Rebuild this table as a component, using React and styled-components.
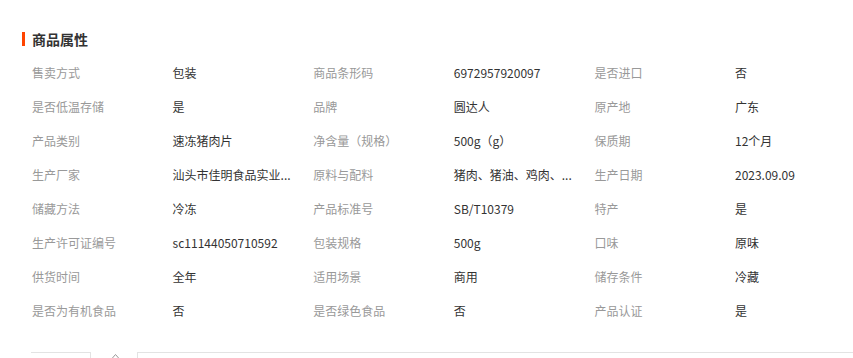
import React from "react";
import styled, { createGlobalStyle } from "styled-components";

const Global = createGlobalStyle`
  body {
    margin: 0;
    background: #fff;
    font-family: "Noto Sans CJK SC", "Liberation Sans", sans-serif;
    overflow: hidden;
  }
`;

const Page = styled.div`
  width: 853px;
  height: 358px;
  overflow: hidden;
  padding-top: 29px;
  box-sizing: border-box;
`;

const Title = styled.h2`
  margin: 0 0 6px 22px;
  display: flex;
  align-items: center;
  height: 20px;
  font-size: 14px;
  font-weight: bold;
  color: #333;
  &::before {
    content: "";
    width: 3px;
    height: 14px;
    background: #ff4400;
    margin-right: 7px;
  }
`;

const Grid = styled.div`
  display: grid;
  grid-template-columns: repeat(6, 140.6px);
  grid-auto-rows: 34px;
  padding-left: 32px;
`;

const Cell = styled.div`
  display: flex;
  align-items: center;
  font-size: 12px;
  color: ${(p) => (p.$label ? "#999" : "#333")};
  white-space: nowrap;
`;

const Bottom = styled.div`
  display: flex;
  align-items: flex-start;
  margin-top: 25px;
  height: 10px;
`;

const Tab = styled.div`
  margin-left: 31px;
  width: 59px;
  height: 10px;
  border-top: 1px solid #e3e3e3;
  border-right: 1px solid #e3e3e3;
`;

const Caret = styled.svg`
  margin: 1px 0 0 20px;
`;

const Panel = styled.div`
  margin-left: 17px;
  flex: 1;
  height: 10px;
  border-top: 1px solid #e3e3e3;
  border-left: 1px solid #e3e3e3;
`;

const rows = [
  ["售卖方式", "包装", "商品条形码", "6972957920097", "是否进口", "否"],
  ["是否低温存储", "是", "品牌", "圆达人", "原产地", "广东"],
  ["产品类别", "速冻猪肉片", "净含量（规格）", "500g（g）", "保质期", "12个月"],
  ["生产厂家", "汕头市佳明食品实业...", "原料与配料", "猪肉、猪油、鸡肉、...", "生产日期", "2023.09.09"],
  ["储藏方法", "冷冻", "产品标准号", "SB/T10379", "特产", "是"],
  ["生产许可证编号", "sc11144050710592", "包装规格", "500g", "口味", "原味"],
  ["供货时间", "全年", "适用场景", "商用", "储存条件", "冷藏"],
  ["是否为有机食品", "否", "是否绿色食品", "否", "产品认证", "是"],
];

export default function App() {
  return (
    <Page>
      <Global />
      <Title>商品属性</Title>
      <Grid>
        {rows.map((r, i) =>
          r.map((t, j) => (
            <Cell key={i + "-" + j} $label={j % 2 === 0}>
              {t}
            </Cell>
          ))
        )}
      </Grid>
      <Bottom>
        <Tab />
        <Caret width="9" height="6" viewBox="0 0 9 6">
          <path d="M1 5.5 L4.5 1.5 L8 5.5" fill="none" stroke="#999" strokeWidth="1" />
        </Caret>
        <Panel />
      </Bottom>
    </Page>
  );
}
